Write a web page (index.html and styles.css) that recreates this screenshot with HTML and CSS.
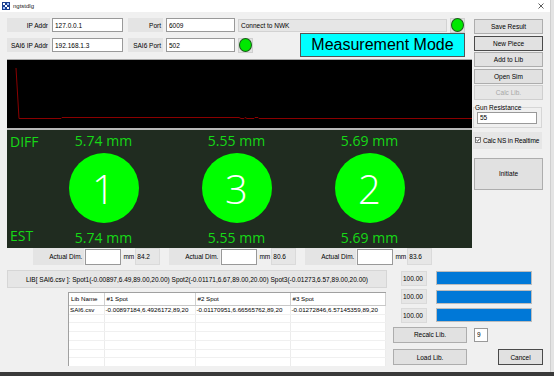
FILE: index.html
```html
<!DOCTYPE html>
<html lang="en">
<head>
    <meta charset="UTF-8">
    <title>ngtstdlg</title>
    <link rel="stylesheet" href="styles.css">
</head>
<body>
<div class="window">
    <!-- title bar -->
    <div class="titlebar">
        <svg class="app-icon" viewBox="0 0 8 8">
            <rect width="8" height="8" fill="#1b3f8f"/>
            <rect x="1" y="1" width="2" height="2" fill="#fff"/>
            <rect x="5" y="1" width="2" height="2" fill="#9fc3ff"/>
            <rect x="3" y="3" width="2" height="2" fill="#fff"/>
            <rect x="1" y="5" width="2" height="2" fill="#9fc3ff"/>
            <rect x="5" y="5" width="2" height="2" fill="#fff"/>
        </svg>
        <span class="title">ngtstdlg</span>
        <svg class="close" viewBox="0 0 6 6">
            <path d="M0.5 0.5 L5.5 5.5 M5.5 0.5 L0.5 5.5" stroke="#333" stroke-width="0.8"/>
        </svg>
    </div>

    <div class="client">
        <div class="top">
            <div class="main">
                <div class="row row-conn">
                    <span class="lbl lbl-ip">IP Addr</span>
                    <input class="edit edit-ip" type="text" value="127.0.0.1">
                    <span class="lbl lbl-port">Port</span>
                    <input class="edit edit-port" type="text" value="6009">
                    <span class="status">Connect to NWK</span>
                    <span class="led-box"><span class="led"></span></span>
                </div>
                <div class="row row-sai">
                    <span class="lbl lbl-ip">SAI6 IP Addr</span>
                    <input class="edit edit-ip" type="text" value="192.168.1.3">
                    <span class="lbl lbl-port">SAI6 Port</span>
                    <input class="edit edit-port" type="text" value="502">
                    <span class="led-box"><span class="led"></span></span>
                    <div class="mode">Measurement Mode</div>
                </div>

                <!-- trend chart -->
                <div class="chart">
                    <svg viewBox="0 0 465 68" width="465" height="68">
                        <polyline fill="none" stroke="#8b0000" stroke-width="1"
                            points="9,8 12,58.5 54,58.5 55,57.5 232,57.5 234,58.5 237,58.5 238,57.5 240,58.5 247,58.5 248,57.5 251,57.5 252,58.5 465,58.5"/>
                    </svg>
                </div>

                <!-- spots -->
                <div class="spots">
                    <div class="side-tags">
                        <span>DIFF</span>
                        <span>EST</span>
                    </div>
                    <div class="spot">
                        <span class="mm">5.74 mm</span>
                        <span class="dot">1</span>
                        <span class="mm">5.74 mm</span>
                    </div>
                    <div class="spot">
                        <span class="mm">5.55 mm</span>
                        <span class="dot">3</span>
                        <span class="mm">5.55 mm</span>
                    </div>
                    <div class="spot">
                        <span class="mm">5.69 mm</span>
                        <span class="dot">2</span>
                        <span class="mm">5.69 mm</span>
                    </div>
                </div>
            </div>

            <div class="side">
                <button class="btn">Save Result</button>
                <button class="btn btn-default">New Piece</button>
                <button class="btn">Add to Lib</button>
                <button class="btn">Open Sim</button>
                <button class="btn" disabled>Calc Lib.</button>
                <fieldset class="group">
                    <legend>Gun Resistance</legend>
                    <input class="edit edit-gun" type="text" value="55">
                </fieldset>
                <label class="check">
                    <svg class="check-box" viewBox="0 0 6 6">
                        <rect x="0.5" y="0.5" width="5" height="5" fill="#fff" stroke="#333" stroke-width="0.6"/>
                        <path d="M1.4 3 L2.6 4.2 L4.7 1.6" fill="none" stroke="#111" stroke-width="0.8"/>
                    </svg>
                    <span>Calc NS in Realtime</span>
                </label>
                <button class="btn btn-initiate">Initiate</button>
            </div>
        </div>

        <!-- actual dimensions -->
        <div class="dims">
            <div class="dim">
                <span class="lbl lbl-dim">Actual Dim.</span>
                <input class="edit edit-dim" type="text">
                <span class="unit">mm</span>
                <span class="ro ro-dim">84.2</span>
            </div>
            <div class="dim">
                <span class="lbl lbl-dim">Actual Dim.</span>
                <input class="edit edit-dim" type="text">
                <span class="unit">mm</span>
                <span class="ro ro-dim">80.6</span>
            </div>
            <div class="dim">
                <span class="lbl lbl-dim">Actual Dim.</span>
                <input class="edit edit-dim" type="text">
                <span class="unit">mm</span>
                <span class="ro ro-dim">83.6</span>
            </div>
        </div>

        <div class="bottom">
            <div class="lib-col">
                <div class="lib-line">LIB[ SAI6.csv ]: Spot1(-0.00897,6.49,89.00,20.00) Spot2(-0.01171,6.67,89.00,20.00) Spot3(-0.01273,6.57,89.00,20.00)</div>
                <div class="table-wrap">
                    <table class="lib-table">
                        <colgroup>
                            <col class="c-name"><col class="c-spot1"><col class="c-spot2"><col>
                        </colgroup>
                        <thead>
                            <tr><th>Lib Name</th><th>#1 Spot</th><th>#2 Spot</th><th>#3 Spot</th></tr>
                        </thead>
                        <tbody>
                            <tr><td>SAI6.csv</td><td>-0.00897184,6.4926172,89,20</td><td>-0.01170951,6.66565762,89,20</td><td>-0.01272846,6.57145359,89,20</td></tr>
                            <tr><td></td><td></td><td></td><td></td></tr>
                            <tr><td></td><td></td><td></td><td></td></tr>
                            <tr><td></td><td></td><td></td><td></td></tr>
                            <tr><td></td><td></td><td></td><td></td></tr>
                            <tr><td></td><td></td><td></td><td></td></tr>
                            <tr><td></td><td></td><td></td><td></td></tr>
                        </tbody>
                    </table>
                </div>
            </div>

            <div class="ctrl-col">
                <div class="prog-row">
                    <span class="ro ro-prog">100.00</span>
                    <div class="bar"><div class="fill" style="width: 100%"></div></div>
                </div>
                <div class="prog-row">
                    <span class="ro ro-prog">100.00</span>
                    <div class="bar"><div class="fill" style="width: 100%"></div></div>
                </div>
                <div class="prog-row">
                    <span class="ro ro-prog">100.00</span>
                    <div class="bar"><div class="fill" style="width: 100%"></div></div>
                </div>
                <div class="btn-row recalc-row">
                    <button class="btn btn-lib">Recalc Lib.</button>
                    <input class="edit edit-count" type="text" value="9">
                </div>
                <div class="btn-row load-row">
                    <button class="btn btn-lib">Load Lib.</button>
                    <button class="btn btn-default btn-cancel">Cancel</button>
                </div>
            </div>
        </div>
    </div>
</div>
</body>
</html>
```

FILE: styles.css
```css
* {
    box-sizing: border-box;
}

html, body {
    margin: 0;
    padding: 0;
}

body {
    width: 554px;
    height: 376px;
    overflow: hidden;
    background: linear-gradient(#e4e4e4 372px, #3a3a3a 372px);
    font-family: "Liberation Sans", Arial, sans-serif;
    font-size: 6.5px;
    color: #000;
}

.window {
    width: 551px;
    height: 372px;
    background: #f0f0f0;
    border-right: 1px solid #cfcfcf;
    display: flex;
    flex-direction: column;
}

/* title bar */
.titlebar {
    height: 12px;
    background: #fff;
    display: flex;
    align-items: center;
    padding-left: 2px;
}

.app-icon {
    width: 8px;
    height: 8px;
}

.title {
    margin-left: 3px;
    font-size: 6px;
    color: #222;
}

.close {
    width: 6px;
    height: 6px;
    margin-left: auto;
    margin-right: 6px;
}

.client {
    flex: 1;
    display: flex;
    flex-direction: column;
    padding: 6px 0 0 7px;
}

.top {
    display: flex;
    gap: 1px;
}

.main {
    width: 465px;
    display: flex;
    flex-direction: column;
}

/* connection rows */
.row {
    display: flex;
    align-items: center;
    padding-right: 7px;
}

.row-conn {
    height: 14px;
}

.row-sai {
    height: 24px;
    margin-top: 1px;
}

.lbl {
    height: 14px;
    background: #e4e4e4;
    display: flex;
    align-items: center;
    justify-content: flex-end;
    padding-right: 2px;
    white-space: nowrap;
}

.lbl-ip {
    width: 43px;
}

.lbl-port {
    width: 35px;
    margin-left: 5px;
}

.edit {
    height: 14px;
    border: 1px solid #999;
    background: #fff;
    font: inherit;
    padding: 0 2px;
    margin: 0;
    outline: none;
    color: #000;
}

.edit-ip {
    width: 71px;
    margin-left: 2px;
}

.edit-port {
    width: 69px;
    margin-left: 3px;
}

.status {
    width: 209px;
    height: 13px;
    margin-left: 3px;
    background: #e6e6e6;
    border: 1px solid #d2d2d2;
    display: flex;
    align-items: center;
    padding-left: 2px;
}

.led-box {
    width: 15px;
    height: 15px;
    margin-left: 3px;
    background: #e2e2e2;
    border: 1px solid #cfcfcf;
    display: flex;
    align-items: center;
    justify-content: center;
}

.led {
    width: 14px;
    height: 14px;
    border-radius: 50%;
    background: #00e800;
    border: 1px solid #1a5a1a;
}

.mode {
    margin-left: auto;
    width: 165px;
    height: 24px;
    background: #00ffff;
    border: 1px solid #555;
    font-size: 16px;
    display: flex;
    align-items: center;
    justify-content: center;
}

/* chart */
.chart {
    margin-top: 2px;
    height: 71px;
    background: #000;
    border-top: 1px solid #a8a8a8;
    border-bottom: 2px solid #b8b8b8;
}

.chart svg {
    display: block;
}

/* spot panel */
.spots {
    height: 118px;
    background: #202c20;
    display: grid;
    grid-template-columns: 27px 133px 133px 133px;
    padding: 1px 0 0 3px;
    font-family: "Open Sans", "Liberation Sans", sans-serif;
    color: #16d816;
}

.side-tags {
    display: flex;
    flex-direction: column;
    justify-content: space-between;
    font-size: 14px;
    white-space: nowrap;
    padding: 1px 0 3px;
}

.spot {
    display: flex;
    flex-direction: column;
    align-items: center;
}

.mm {
    font-size: 14px;
    line-height: 19px;
}

.dot {
    width: 70px;
    height: 70px;
    margin: 3px 0 5px;
    border-radius: 50%;
    background: #00ff00;
    color: #fff;
    font-size: 40px;
    font-weight: 300;
    display: flex;
    align-items: center;
    justify-content: center;
}

/* right-hand buttons */
.side {
    width: 70px;
    display: flex;
    flex-direction: column;
    padding-top: 1px;
}

.btn {
    height: 15px;
    margin: 0 0 1.5px 1px;
    background: #e1e1e1;
    border: 1px solid #adadad;
    font: inherit;
    color: #000;
    padding: 0;
}

.btn:disabled {
    color: #a6a6a6;
    background: #e6e6e6;
    border-color: #cfcfcf;
}

.btn-default {
    border-color: #4a4a4a;
}

.group {
    margin: 2px 1px 0 0;
    height: 24px;
    border: 1px solid #d6d6d6;
    padding: 0 0 0 3px;
}

.group legend {
    padding: 0;
    margin-left: -2px;
    line-height: 7px;
}

.edit-gun {
    width: 60px;
    height: 12px;
    margin-top: 1px;
}

.check {
    margin: 4px 1px 0 0;
    height: 17px;
    background: #e6e6e6;
    display: flex;
    align-items: center;
    gap: 2px;
    padding-left: 2px;
    white-space: nowrap;
    letter-spacing: -0.1px;
}

.check-box {
    width: 6px;
    height: 6px;
    flex: none;
}

.btn-initiate {
    height: 32px;
    margin-top: 9px;
}

/* actual dims */
.dims {
    display: flex;
    gap: 9px;
    margin: 0 0 0 26px;
    height: 17px;
}

.dim {
    display: flex;
    align-items: center;
    width: 127px;
}

.lbl-dim {
    width: 52px;
    height: 17px;
}

.edit-dim {
    width: 36px;
    height: 16px;
    margin-left: 1px;
}

.unit {
    width: 14px;
    padding-left: 2px;
}

.ro {
    background: #e6e6e6;
    border: 1px solid #dadada;
    display: flex;
    align-items: center;
    padding-left: 1px;
}

.ro-dim {
    width: 25px;
    height: 17px;
}

/* lib list + progress */
.bottom {
    display: flex;
    gap: 6px;
    margin-top: 5px;
}

.lib-col {
    width: 380px;
}

.lib-line {
    height: 18px;
    background: #e6e6e6;
    border: 1px solid #d6d6d6;
    display: flex;
    align-items: center;
    justify-content: center;
    white-space: nowrap;
}

.table-wrap {
    margin: 4px 0 0 61px;
    width: 318px;
    height: 74px;
    background: #fff;
    border-left: 1px solid #a0a0a0;
    border-top: 1px solid #a0a0a0;
    overflow: hidden;
    font-size: 6.2px;
}

.lib-table {
    width: 100%;
    border-collapse: collapse;
    table-layout: fixed;
}

.c-name {
    width: 35px;
}

.c-spot1 {
    width: 91px;
}

.c-spot2 {
    width: 95px;
}

.lib-table th {
    height: 12px;
    font-weight: normal;
    text-align: left;
    padding: 0 2px;
    border-right: 1px solid #d0d0d0;
    border-bottom: 1px solid #c8c8c8;
    white-space: nowrap;
}

.lib-table td {
    height: 8.8px;
    padding: 0 1px;
    border-right: 1px solid #ececec;
    border-bottom: 1px solid #f0f0f0;
    white-space: nowrap;
    overflow: hidden;
    line-height: 8px;
}

.ctrl-col {
    width: 154px;
    display: flex;
    flex-direction: column;
    padding-top: 1px;
}

.prog-row {
    display: flex;
    align-items: center;
    gap: 9px;
    height: 14px;
    margin: 0 0 4.5px 8px;
}

.ro-prog {
    width: 26px;
    height: 15px;
}

.bar {
    width: 96px;
    height: 14px;
    background: #e6e6e6;
    border: 1px solid #bcbcbc;
}

.fill {
    height: 100%;
    background: #0078d7;
}

.btn-row {
    display: flex;
    align-items: center;
}

.recalc-row {
    height: 16px;
}

.load-row {
    margin-top: 6px;
    height: 17px;
}

.btn-lib {
    width: 74px;
    height: 16px;
    margin: 0;
}

.edit-count {
    width: 14px;
    height: 14px;
    margin-left: 7px;
}

.btn-cancel {
    width: 45px;
    height: 16px;
    margin: 0 0 0 31px;
}
```
